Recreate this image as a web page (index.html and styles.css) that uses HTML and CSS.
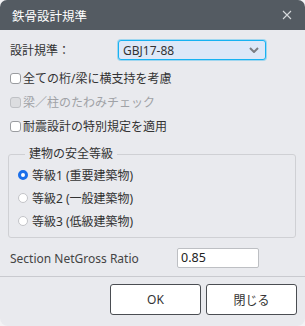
FILE: index.html
```html
<!DOCTYPE html>
<html lang="ja">
<head>
    <meta charset="UTF-8">
    <title>鉄骨設計規準</title>
    <link rel="stylesheet" href="styles.css">
</head>
<body>
    <div class="dialog">
        <!-- Title bar -->
        <div class="titlebar">
            <span class="title">鉄骨設計規準</span>
            <svg class="close" width="10" height="10" viewBox="0 0 10 10">
                <path d="M1 1 L9 9 M9 1 L1 9" stroke="#d6d8db" stroke-width="1.1" fill="none"/>
            </svg>
        </div>

        <div class="content">
            <div class="row-standard">
                <span class="label">設計規準：</span>
                <div class="select">
                    <span>GBJ17-88</span>
                    <svg width="10" height="6" viewBox="0 0 10 6">
                        <path d="M1 1 L5 5 L9 1" stroke="#7a7d83" stroke-width="2" fill="none"/>
                    </svg>
                </div>
            </div>

            <div class="check-row"><span class="box"></span>全ての桁/梁に横支持を考慮</div>
            <div class="check-row disabled"><span class="box"></span>梁／柱のたわみチェック</div>
            <div class="check-row"><span class="box"></span>耐震設計の特別規定を適用</div>

            <fieldset class="grade">
                <legend>建物の安全等級</legend>
                <div class="radio-row"><span class="radio checked"></span>等級1 (重要建築物)</div>
                <div class="radio-row"><span class="radio"></span>等級2 (一般建築物)</div>
                <div class="radio-row"><span class="radio"></span>等級3 (低級建築物)</div>
            </fieldset>

            <div class="row-ratio">
                <span class="label-ratio">Section NetGross Ratio</span>
                <div class="input">0.85</div>
            </div>
        </div>

        <div class="separator"></div>

        <div class="footer">
            <button class="btn">OK</button>
            <button class="btn">閉じる</button>
        </div>
    </div>
</body>
</html>
```

FILE: styles.css
```css
body {
    margin: 0;
    background-color: #f3f3f5;
    font-family: "Noto Sans", "Noto Sans CJK JP", sans-serif;
    font-size: 12px;
    color: #333;
}

.dialog {
    width: 305px;
    height: 326px;
    background-color: #e9eaee;
    border-radius: 7px 7px 8px 8px;
    overflow: hidden;
    display: flex;
    flex-direction: column;
}

.titlebar {
    height: 30px;
    flex-shrink: 0;
    background-color: #545b62;
    display: flex;
    align-items: center;
    justify-content: space-between;
    padding: 0 12px 0 12px;
}

.title {
    color: #ffffff;
    font-size: 12.5px;
}

.close {
    margin-right: 1px;
}

.content {
    padding: 10px 9px 0 10px;
}

.row-standard {
    display: flex;
    align-items: center;
    height: 20px;
}

.label {
    width: 108px;
}

.select {
    width: 148px;
    height: 20px;
    box-sizing: border-box;
    border: 1px solid #17b2f2;
    box-shadow: 0 0 0 1px rgba(23, 178, 242, 0.35);
    border-radius: 3px;
    background-color: #dde8f8;
    display: flex;
    align-items: center;
    justify-content: space-between;
    padding: 0 6px 0 4px;
    color: #333;
}

.check-row {
    display: flex;
    align-items: center;
    height: 24px;
}

.row-standard + .check-row {
    margin-top: 6px;
}

.box {
    width: 11px;
    height: 11px;
    box-sizing: border-box;
    border: 1px solid #9a9ca0;
    border-radius: 3px;
    background-color: #ffffff;
    margin-right: 2px;
}

.disabled {
    color: #a0a2a6;
}

.disabled .box {
    background-color: #dcdde0;
    border-color: #bfc1c5;
}

.grade {
    margin: 8px 0 0 -2px;
    padding: 1px 9px 5px 9px;
    border: 1px solid #cfd0d4;
    border-radius: 3px;
    width: 288px;
    box-sizing: border-box;
}

.grade legend {
    padding: 0 4px;
    margin-left: 7px;
    line-height: 16px;
}

.radio-row {
    display: flex;
    align-items: center;
    height: 23px;
}

.radio {
    width: 10px;
    height: 10px;
    box-sizing: border-box;
    border: 1px solid #c3c4c8;
    border-radius: 50%;
    background-color: #ffffff;
    margin-right: 4px;
}

.radio.checked {
    border: 3px solid #1a6fea;
}

.row-ratio {
    display: flex;
    align-items: center;
    height: 20px;
    margin-top: 10px;
}

.label-ratio {
    width: 167px;
    color: #444;
}

.input {
    width: 82px;
    height: 20px;
    box-sizing: border-box;
    border: 1px solid #bdbfc3;
    border-radius: 2px;
    background-color: #ffffff;
    padding: 0 3px;
    line-height: 18px;
    font-size: 12.5px;
    color: #222;
}

.separator {
    height: 1px;
    background-color: #c9cacf;
    margin-top: 8px;
}

.footer {
    display: flex;
    justify-content: flex-end;
    gap: 5px;
    padding: 7px 8px 0 0;
}

.btn {
    width: 91px;
    height: 31px;
    background-color: #ffffff;
    border: 1px solid #4a4d52;
    border-radius: 3px;
    font-family: "Noto Sans", "Noto Sans CJK JP", sans-serif;
    font-size: 12px;
    color: #333;
}
```
